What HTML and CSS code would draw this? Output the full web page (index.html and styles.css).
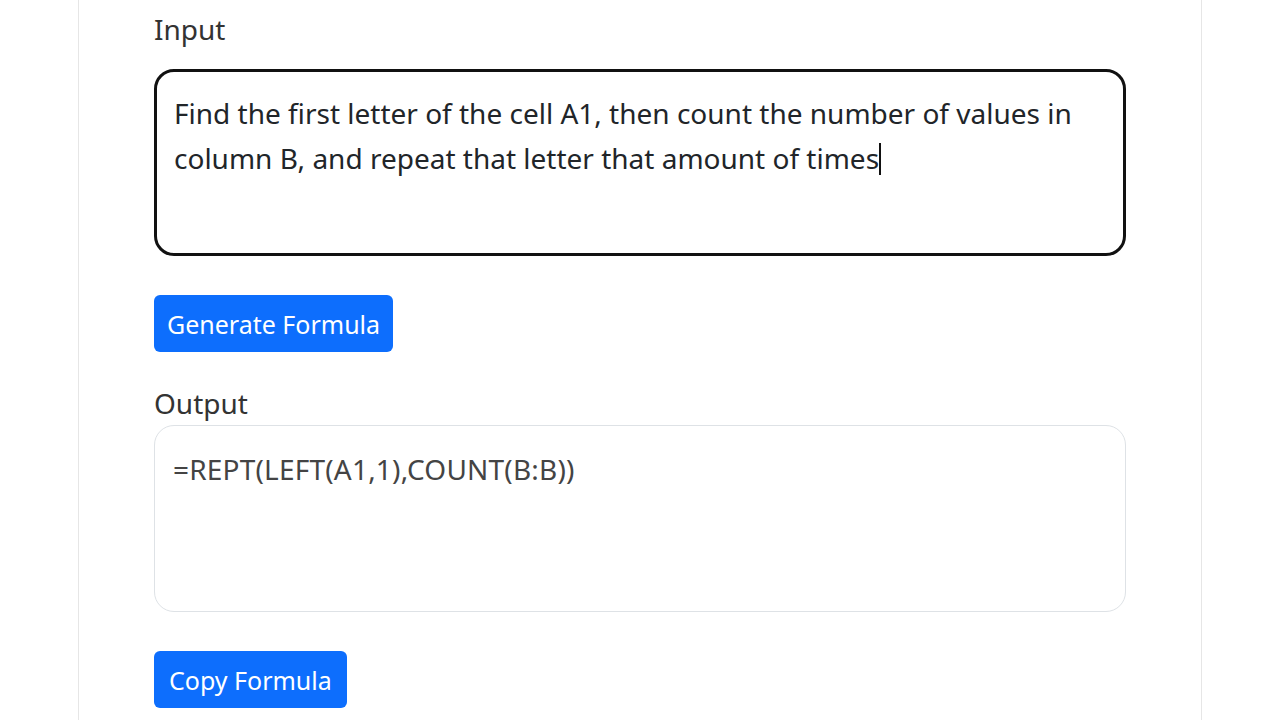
FILE: index.html
```html
<!DOCTYPE html>
<html lang="en">

<head>
    <meta charset="UTF-8">
    <meta name="viewport" content="width=device-width, initial-scale=1.0">
    <title>Formula Generator</title>
    <link rel="stylesheet" href="styles.css">
</head>

<body>
    <div class="card">
        <div class="inner">
            <label class="label label-input">Input</label>
            <div class="box box-input">Find the first letter of the cell A1, then count the number of values in column B, and repeat that letter that amount of times<span class="caret"></span></div>

            <button class="btn btn-generate">Generate Formula</button>

            <label class="label label-output">Output</label>
            <div class="box box-output">=REPT(LEFT(A1,1),COUNT(B:B))</div>

            <button class="btn btn-copy">Copy Formula</button>
        </div>
    </div>
</body>

</html>
```

FILE: styles.css
```css
body {
    margin: 0;
    background: #fff;
    font-family: "Noto Sans", "Open Sans", sans-serif;
}

.card {
    margin-left: 78px;
    width: 1124px;
    height: 720px;
    border-left: 1px solid #e6e6e6;
    border-right: 1px solid #e6e6e6;
    box-sizing: border-box;
    overflow: hidden;
}

.inner {
    display: flex;
    flex-direction: column;
    align-items: flex-start;
    padding-left: 75px;
    width: 972px;
}

.label {
    display: block;
    font-size: 28px;
    line-height: 42px;
    color: #333;
}

.label-input {
    margin-top: 8px;
    margin-bottom: 19px;
}

.label-output {
    margin-top: 30px;
    margin-bottom: 1px;
}

.box {
    width: 100%;
    height: 187px;
    box-sizing: border-box;
    border-radius: 20px;
    font-size: 28px;
    line-height: 45px;
}

.box-input {
    border: 3px solid #111;
    padding: 19px 40px 0 17px;
    color: #212529;
}

.box-output {
    border: 1.5px solid #dee2e6;
    padding: 21px 18px 0 18px;
    color: #444;
    letter-spacing: 0.2px;
}

.caret {
    display: inline-block;
    width: 1.5px;
    height: 32px;
    background: #111;
    vertical-align: -6px;
}

.btn {
    height: 57px;
    padding: 0 15px;
    border: none;
    border-radius: 6px;
    background: #0d6efd;
    color: #fff;
    font-family: "Noto Sans", "Open Sans", sans-serif;
    font-size: 25px;
}

.btn-generate {
    margin-top: 39px;
    padding: 0 13px;
}

.btn-copy {
    margin-top: 39px;
}
```
